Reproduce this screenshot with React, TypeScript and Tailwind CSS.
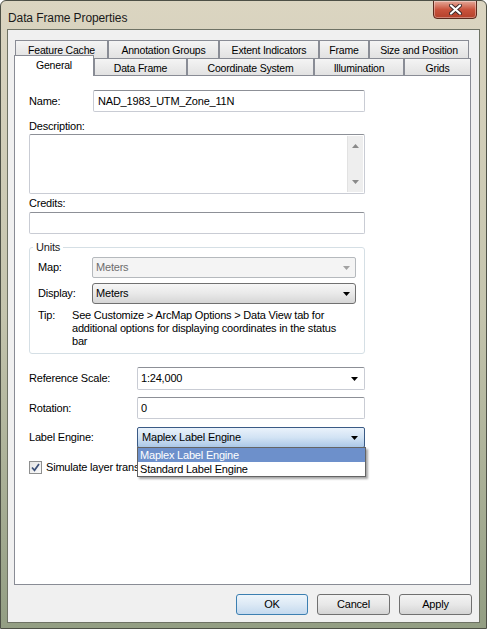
import React from "react";

// drop-down arrow glyph used by the combo boxes
const Arrow = ({ color = "#000" }: { color?: string }) => (
  <svg width="7" height="4" viewBox="0 0 7 4" className="shrink-0">
    <path d="M0 0h7L3.5 4z" fill={color} />
  </svg>
);

const tabsTop = [
  { label: "Feature Cache", w: "w-[93px]" },
  { label: "Annotation Groups", w: "w-[111px]" },
  { label: "Extent Indicators", w: "w-[100px]" },
  { label: "Frame", w: "w-[50px]" },
  { label: "Size and Position", w: "w-[100px]" },
];

const tabsBottom = [
  { label: "Data Frame", w: "w-[93px]" },
  { label: "Coordinate System", w: "w-[127px]" },
  { label: "Illumination", w: "w-[90px]" },
  { label: "Grids", w: "w-[67px]" },
];

const field =
  "h-[22px] border border-[#c9ccd4] border-t-[#8d9097] rounded-[2px] bg-white flex items-center";

export default function App() {
  return (
    <div className="w-[487px] h-[629px] flex flex-col rounded-t-[6px] border border-[#4d5046] bg-gradient-to-b from-[#dbd5c1] via-[#c4c4ad] to-[#939e83] font-['Liberation_Sans',Arial,sans-serif] text-[11px] tracking-[-0.2px] text-black overflow-hidden select-none">
      {/* title bar */}
      <div className="h-[28px] flex items-start justify-between pl-[7px] pr-[9px]">
        <span className="text-[12px] tracking-[-0.1px] mt-[8px] text-[#1a1a1a]">Data Frame Properties</span>
        <div className="w-[44px] h-[19px] -mt-px rounded-b-[4px] border border-[#5b2a1e] bg-gradient-to-b from-[#e3a899] via-[#c9533d] to-[#b4412b] flex items-center justify-center shadow-[inset_0_0_0_1px_rgba(255,255,255,0.35)]">
          <svg width="13" height="11" viewBox="0 0 13 11">
            <path d="M2 1.5l9 8M11 1.5l-9 8" stroke="#3b2a2a" strokeWidth="4" strokeLinecap="round" />
            <path d="M2 1.5l9 8M11 1.5l-9 8" stroke="#fff" strokeWidth="2.2" strokeLinecap="round" />
          </svg>
        </div>
      </div>

      {/* client area */}
      <div className="mx-[6px] mb-[5px] flex-1 border border-[#6e7264] bg-[#f0f0f0] flex flex-col pt-[10px] pl-[6px] pr-[7px]">
        {/* tabs, top row */}
        <div className="h-[18px] flex pl-px">
          {tabsTop.map((t) => (
            <div
              key={t.label}
              className={`${t.w} h-[18px] border border-b-0 border-[#898c95] bg-gradient-to-b from-[#f4f4f4] to-[#e2e2e2] flex items-start justify-center pt-[2px] text-[10.5px]`}
            >
              {t.label}
            </div>
          ))}
        </div>
        {/* tabs, bottom row */}
        <div className="h-[17px] flex items-end">
          <div className="relative z-10 w-[80px] h-[21px] -mb-px border border-b-0 border-[#898c95] bg-white flex justify-center pt-[2px] text-[10.5px]">
            General
          </div>
          {tabsBottom.map((t) => (
            <div
              key={t.label}
              className={`${t.w} h-[17px] border border-b-0 border-[#898c95] bg-gradient-to-b from-[#f4f4f4] to-[#e2e2e2] flex justify-center pt-[2px] text-[10.5px]`}
            >
              {t.label}
            </div>
          ))}
        </div>

        {/* tab page */}
        <div className="w-[457px] h-[510px] border border-[#898c95] bg-white pl-[14px] pt-[14px] flex flex-col">
          <div className="w-[336px] flex flex-col">
            {/* name */}
            <div className="flex items-center">
              <span className="w-[64px]">Name:</span>
              <div className={`${field} flex-1 pl-[4px]`}>NAD_1983_UTM_Zone_11N</div>
            </div>

            <span className="mt-[8px] leading-[13px]">Description:</span>
            <div className="mt-[1px] h-[60px] border border-[#c9ccd4] border-t-[#8d9097] rounded-[2px] bg-white flex justify-end p-px">
              <div className="w-[16px] bg-[#eeeeee] border-l border-[#e2e2e2] flex flex-col items-center justify-between py-[8px]">
                <svg width="7" height="4" viewBox="0 0 7 4"><path d="M0 4h7L3.5 0z" fill="#8a8a8a" /></svg>
                <svg width="7" height="4" viewBox="0 0 7 4"><path d="M0 0h7L3.5 4z" fill="#8a8a8a" /></svg>
              </div>
            </div>

            <span className="mt-[3px] leading-[13px]">Credits:</span>
            <div className={`${field} mt-[2px]`} />

            {/* units group */}
            <fieldset className="mt-[7px] border border-[#d5dfe5] rounded-[3px] pl-[3px] pr-[8px] pb-[5px]">
              <legend className="px-[3px] leading-[13px] text-[#1a1a1a]">Units</legend>
              <div className="pl-[5px] flex flex-col">
                <div className="mt-[3px] flex items-center">
                  <span className="w-[54px]">Map:</span>
                  <div className="flex-1 h-[21px] border border-[#b5b9bd] rounded-[2px] bg-[#f4f4f4] flex items-center justify-between pl-[3px] pr-[5px] text-[#6d6d6d]">
                    Meters
                    <Arrow color="#a2a2a2" />
                  </div>
                </div>
                <div className="mt-[5px] flex items-center">
                  <span className="w-[54px]">Display:</span>
                  <div className="flex-1 h-[21px] border border-[#707070] rounded-[3px] bg-gradient-to-b from-[#f6f6f6] via-[#e9e9e9] to-[#d6d6d6] flex items-center justify-between pl-[3px] pr-[5px]">
                    Meters
                    <Arrow />
                  </div>
                </div>
                <div className="mt-[5px] flex leading-[13px]">
                  <span className="w-[34px] shrink-0">Tip:</span>
                  <span>
                    See Customize &gt; ArcMap Options &gt; Data View tab for
                    <br />
                    additional options for displaying coordinates in the status
                    <br />
                    bar
                  </span>
                </div>
              </div>
            </fieldset>

            {/* scale, rotation, label engine */}
            <div className="mt-[13px] flex items-center">
              <span className="w-[108px]">Reference Scale:</span>
              <div className={`${field} h-[23px] flex-1 justify-between pl-[3px] pr-[6px]`}>
                1:24,000
                <Arrow />
              </div>
            </div>
            <div className="mt-[7px] flex items-center">
              <span className="w-[108px]">Rotation:</span>
              <div className={`${field} flex-1 pl-[3px]`}>0</div>
            </div>
            <div className="mt-[8px] flex items-center">
              <span className="w-[108px]">Label Engine:</span>
              <div className="relative flex-1 h-[21px]">
                <div className="h-full border border-[#3a5a85] rounded-[2px] bg-gradient-to-b from-[#eaf2fb] via-[#d2e3f4] to-[#abc8e7] flex items-center justify-between pl-[4px] pr-[6px]">
                  Maplex Label Engine
                  <Arrow />
                </div>
                {/* open list */}
                <div className="absolute z-20 left-0 top-[20px] w-[229px] border border-[#646464] bg-white shadow-[2px_2px_2px_rgba(0,0,0,0.35)] flex flex-col">
                  <div className="h-[14px] bg-[#6d90cb] text-white pl-[2px] leading-[14px]">Maplex Label Engine</div>
                  <div className="h-[14px] pl-[2px] leading-[14px]">Standard Label Engine</div>
                </div>
              </div>
            </div>
            <div className="mt-[11px] flex items-center gap-[4px] whitespace-nowrap">
              <div className="w-[13px] h-[13px] shrink-0 border border-[#8e8f8f] bg-gradient-to-br from-[#e4e4e4] to-[#fbfbfb] flex items-center justify-center">
                <svg width="9" height="9" viewBox="0 0 9 9">
                  <path d="M1 4.5l2.5 2.8L8 1" stroke="#3b4f78" strokeWidth="1.7" fill="none" />
                </svg>
              </div>
              {/* the open list hides the rest of this label */}
              <span className="w-[91px] overflow-hidden">Simulate layer transparency in legend</span>
            </div>
          </div>
        </div>

        {/* buttons */}
        <div className="mt-[9px] flex justify-end gap-[9px]">
          <button className="w-[72px] h-[21px] border border-[#3c7fb1] rounded-[3px] bg-gradient-to-b from-[#eef5fb] via-[#dce9f5] to-[#c4d9ee] text-[11px]">
            OK
          </button>
          <button className="w-[73px] h-[21px] border border-[#707070] rounded-[3px] bg-gradient-to-b from-[#f3f3f3] via-[#e8e8e8] to-[#d4d4d4] text-[11px]">
            Cancel
          </button>
          <button className="w-[73px] h-[21px] border border-[#707070] rounded-[3px] bg-gradient-to-b from-[#f3f3f3] via-[#e8e8e8] to-[#d4d4d4] text-[11px]">
            Apply
          </button>
        </div>
      </div>
    </div>
  );
}
